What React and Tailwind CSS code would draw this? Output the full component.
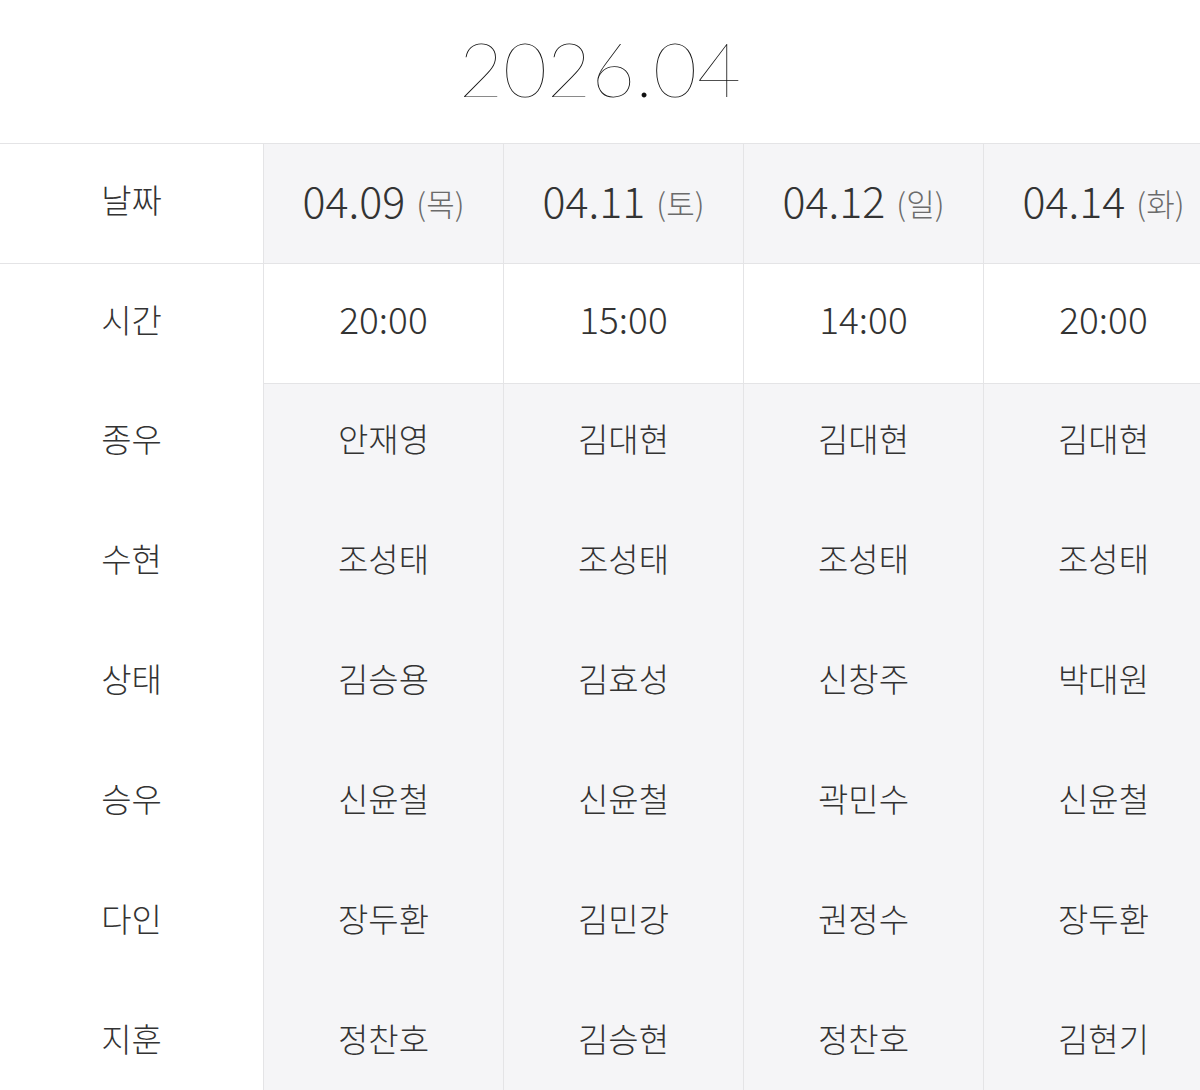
const DAYS = [
  { date: "04.09", dow: "목", time: "20:00", cast: ["안재영", "조성태", "김승용", "신윤철", "장두환", "정찬호"] },
  { date: "04.11", dow: "토", time: "15:00", cast: ["김대현", "조성태", "김효성", "신윤철", "김민강", "김승현"] },
  { date: "04.12", dow: "일", time: "14:00", cast: ["김대현", "조성태", "신창주", "곽민수", "권정수", "정찬호"] },
  { date: "04.14", dow: "화", time: "20:00", cast: ["김대현", "조성태", "박대원", "신윤철", "장두환", "김현기"] },
];

const ROLES = ["종우", "수현", "상태", "승우", "다인", "지훈"];

const font = { fontFamily: '"Noto Sans CJK KR", "Noto Sans", sans-serif' };

const App = () => {
  return (
    <div className="w-[1200px] h-[1090px] overflow-hidden bg-white text-[#333] font-light" style={font}>
      {/* Title */}
      <div className="h-[143px] flex items-center justify-center">
        <h1 className="text-[76px] font-thin leading-none tracking-[0px] text-[#111] font-['Lato',sans-serif] -mt-[8px]">
          2026.04
        </h1>
      </div>

      {/* Table */}
      <div className="grid grid-cols-[263px_240px_240px_240px_240px] w-[1223px] border-t border-[#e4e4e6]">
        {/* Date row */}
        <div className="h-[120px] pb-[8px] flex items-center justify-center text-[33px] border-b border-[#e4e4e6]">
          날짜
        </div>
        {DAYS.map((d) => (
          <div
            key={d.date}
            className="h-[120px] pb-[8px] flex items-center justify-center bg-[#f5f5f7] border-l border-b border-[#e4e4e6]"
          >
            <span className="text-[43px] text-[#333]">{d.date}</span>
            <span className="ml-[11px] mt-[7px] text-[31px] text-[#6b6b6b]">({d.dow})</span>
          </div>
        ))}

        {/* Time row */}
        <div className="h-[120px] pb-[8px] flex items-center justify-center text-[33px]">시간</div>
        {DAYS.map((d) => (
          <div
            key={d.date}
            className="h-[120px] pb-[10px] flex items-center justify-center text-[37px] border-l border-b border-[#e4e4e6]"
          >
            {d.time}
          </div>
        ))}

        {/* Cast rows */}
        {ROLES.map((role, i) => (
          <div key={role} className="contents">
            <div className="h-[120px] pb-[10px] flex items-center justify-center text-[33px]">{role}</div>
            {DAYS.map((d) => (
              <div
                key={d.date}
                className="h-[120px] pb-[10px] flex items-center justify-center text-[33px] bg-[#f5f5f7] border-l border-[#e4e4e6]"
              >
                {d.cast[i]}
              </div>
            ))}
          </div>
        ))}
      </div>
    </div>
  );
};

export default App;
